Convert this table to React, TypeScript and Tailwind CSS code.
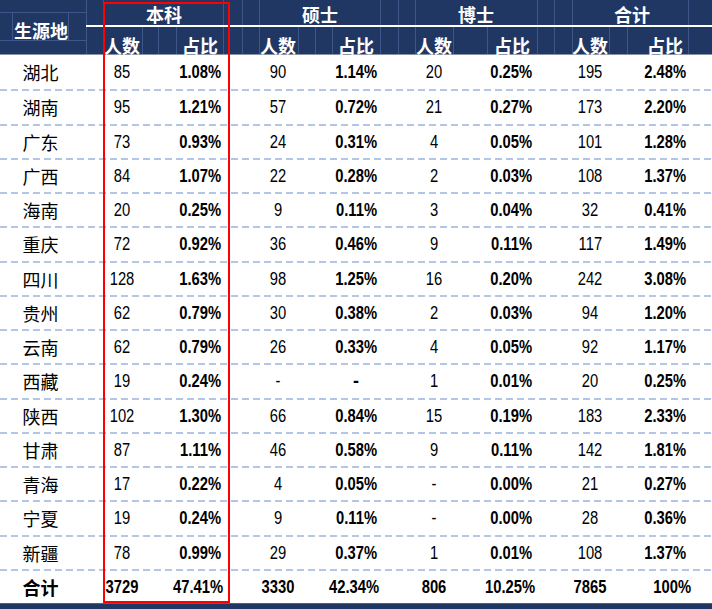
import React from 'react';

type Row = [string, string, string, string, string, string, string, string, string];

const rows: Row[] = [
  ['湖北', '85', '1.08%', '90', '1.14%', '20', '0.25%', '195', '2.48%'],
  ['湖南', '95', '1.21%', '57', '0.72%', '21', '0.27%', '173', '2.20%'],
  ['广东', '73', '0.93%', '24', '0.31%', '4', '0.05%', '101', '1.28%'],
  ['广西', '84', '1.07%', '22', '0.28%', '2', '0.03%', '108', '1.37%'],
  ['海南', '20', '0.25%', '9', '0.11%', '3', '0.04%', '32', '0.41%'],
  ['重庆', '72', '0.92%', '36', '0.46%', '9', '0.11%', '117', '1.49%'],
  ['四川', '128', '1.63%', '98', '1.25%', '16', '0.20%', '242', '3.08%'],
  ['贵州', '62', '0.79%', '30', '0.38%', '2', '0.03%', '94', '1.20%'],
  ['云南', '62', '0.79%', '26', '0.33%', '4', '0.05%', '92', '1.17%'],
  ['西藏', '19', '0.24%', '-', '-', '1', '0.01%', '20', '0.25%'],
  ['陕西', '102', '1.30%', '66', '0.84%', '15', '0.19%', '183', '2.33%'],
  ['甘肃', '87', '1.11%', '46', '0.58%', '9', '0.11%', '142', '1.81%'],
  ['青海', '17', '0.22%', '4', '0.05%', '-', '0.00%', '21', '0.27%'],
  ['宁夏', '19', '0.24%', '9', '0.11%', '-', '0.00%', '28', '0.36%'],
  ['新疆', '78', '0.99%', '29', '0.37%', '1', '0.01%', '108', '1.37%'],
];

const total: Row = ['合计', '3729', '47.41%', '3330', '42.34%', '806', '10.25%', '7865', '100%'];

const groups = ['本科', '硕士', '博士', '合计'];

// right padding of each 占比 column, per group
const pctPad = ['pr-[21px]', 'pr-[21px]', 'pr-[22px]', 'pr-[24px]'];

const cols = 'grid grid-cols-[86px_72px_84px_72px_84px_72px_84px_72px_84px]';
// no narrow face installed, so Liberation Sans is squeezed to Arial Narrow's width
const font = 'font-["Liberation_Sans",Arial,sans-serif]';
const cjk = 'font-["Noto_Sans_CJK_SC",sans-serif]';

const row2Lines = [86, 103, 142, 158, 176, 223, 242, 259, 298, 315, 332, 380, 398, 415, 453, 487, 537, 554, 572, 609, 627, 688];
const row1Lines = [86, 103, 223, 242, 259, 380, 398, 415, 537, 554, 572, 688];

function HeaderGrid() {
  return (
    <svg className="absolute inset-0 pointer-events-none" width="712" height="55" viewBox="0 0 712 55">
      <g stroke="#3e5688" strokeWidth="1">
        {row1Lines.map((x) => (
          <line key={'a' + x} x1={x + 0.5} y1="0" x2={x + 0.5} y2="25" />
        ))}
        {row2Lines.map((x) => (
          <line key={'b' + x} x1={x + 0.5} y1="27" x2={x + 0.5} y2="55" />
        ))}
        <line x1="0" y1="12.5" x2="86" y2="12.5" />
        <line x1="0" y1="40.5" x2="86" y2="40.5" />
        <line x1="12.5" y1="12" x2="12.5" y2="41" />
        <line x1="68.5" y1="12" x2="68.5" y2="41" />
      </g>
      <line x1="0" y1="54.5" x2="712" y2="54.5" stroke="#8a94a8" strokeWidth="1" />
    </svg>
  );
}

function DataRow({ r, first, isTotal }: { r: Row; first?: boolean; isTotal?: boolean }) {
  return (
    <div className="h-[34.25px] flex flex-col">
      {!first && (
        <div className="h-[2px] shrink-0 bg-[repeating-linear-gradient(90deg,#b4c6e7_0px,#b4c6e7_7px,transparent_7px,transparent_11px)]" />
      )}
      <div className={`${cols} flex-1 items-center text-[18px] leading-[18px] text-black`}>
        <div className={`${cjk} text-center pr-[5px] ${isTotal ? 'font-bold' : ''}`}>{r[0]}</div>
        {r.slice(1).map((v, i) => {
          const g = Math.floor(i / 2);
          const isPct = i % 2 === 1;
          if (!isPct) {
            return (
              <div key={i} className={`${font} text-center ${isTotal ? 'font-bold' : ''}`}>
                <span className="inline-block scale-x-[0.82] origin-center">{v}</span>
              </div>
            );
          }
          if (v === '-') {
            return (
              <div key={i} className={`${font} font-bold text-center`}>
                {v}
              </div>
            );
          }
          return (
            <div key={i} className={`${font} font-bold text-right ${isTotal ? 'pr-[19px]' : pctPad[g]}`}>
              <span className="inline-block scale-x-[0.82] origin-right">{v}</span>
            </div>
          );
        })}
      </div>
    </div>
  );
}

export default function App() {
  return (
    <div className="w-[712px] h-[609px] bg-white overflow-hidden relative">
      {/* header */}
      <div className={`relative h-[55px] bg-[#203764] flex text-white font-bold text-[18px] leading-[18px] ${cjk}`}>
        <HeaderGrid />
        <div className="relative w-[86px] flex items-center justify-center pt-[4px] pr-[4px]">生源地</div>
        <div className="relative flex-1 flex flex-col">
          <div className="h-[25px] grid grid-cols-4 w-[624px] items-end pb-[2px]">
            {groups.map((g) => (
              <div key={g} className="text-center">
                {g}
              </div>
            ))}
          </div>
          <div className="h-[2px] bg-white" />
          <div className="h-[28px] grid grid-cols-[72px_84px_72px_84px_72px_84px_72px_84px] items-end pb-[1px]">
            {groups.map((g, i) => (
              <React.Fragment key={g}>
                <div className="text-center">人数</div>
                <div className={`text-right ${i === 3 ? 'pr-[27px]' : 'pr-[24px]'}`}>占比</div>
              </React.Fragment>
            ))}
          </div>
        </div>
      </div>

      {/* body */}
      {rows.map((r, i) => (
        <DataRow key={r[0]} r={r} first={i === 0} />
      ))}
      <DataRow r={total} isTotal />

      {/* bottom bar */}
      <div className="h-[8px] bg-[#203764] border-t border-[#4a5f8c]" />

      {/* highlight box */}
      <div className="absolute left-[103px] top-[2px] w-[127px] h-[601px] border-2 border-[#ff0000] pointer-events-none" />
    </div>
  );
}
